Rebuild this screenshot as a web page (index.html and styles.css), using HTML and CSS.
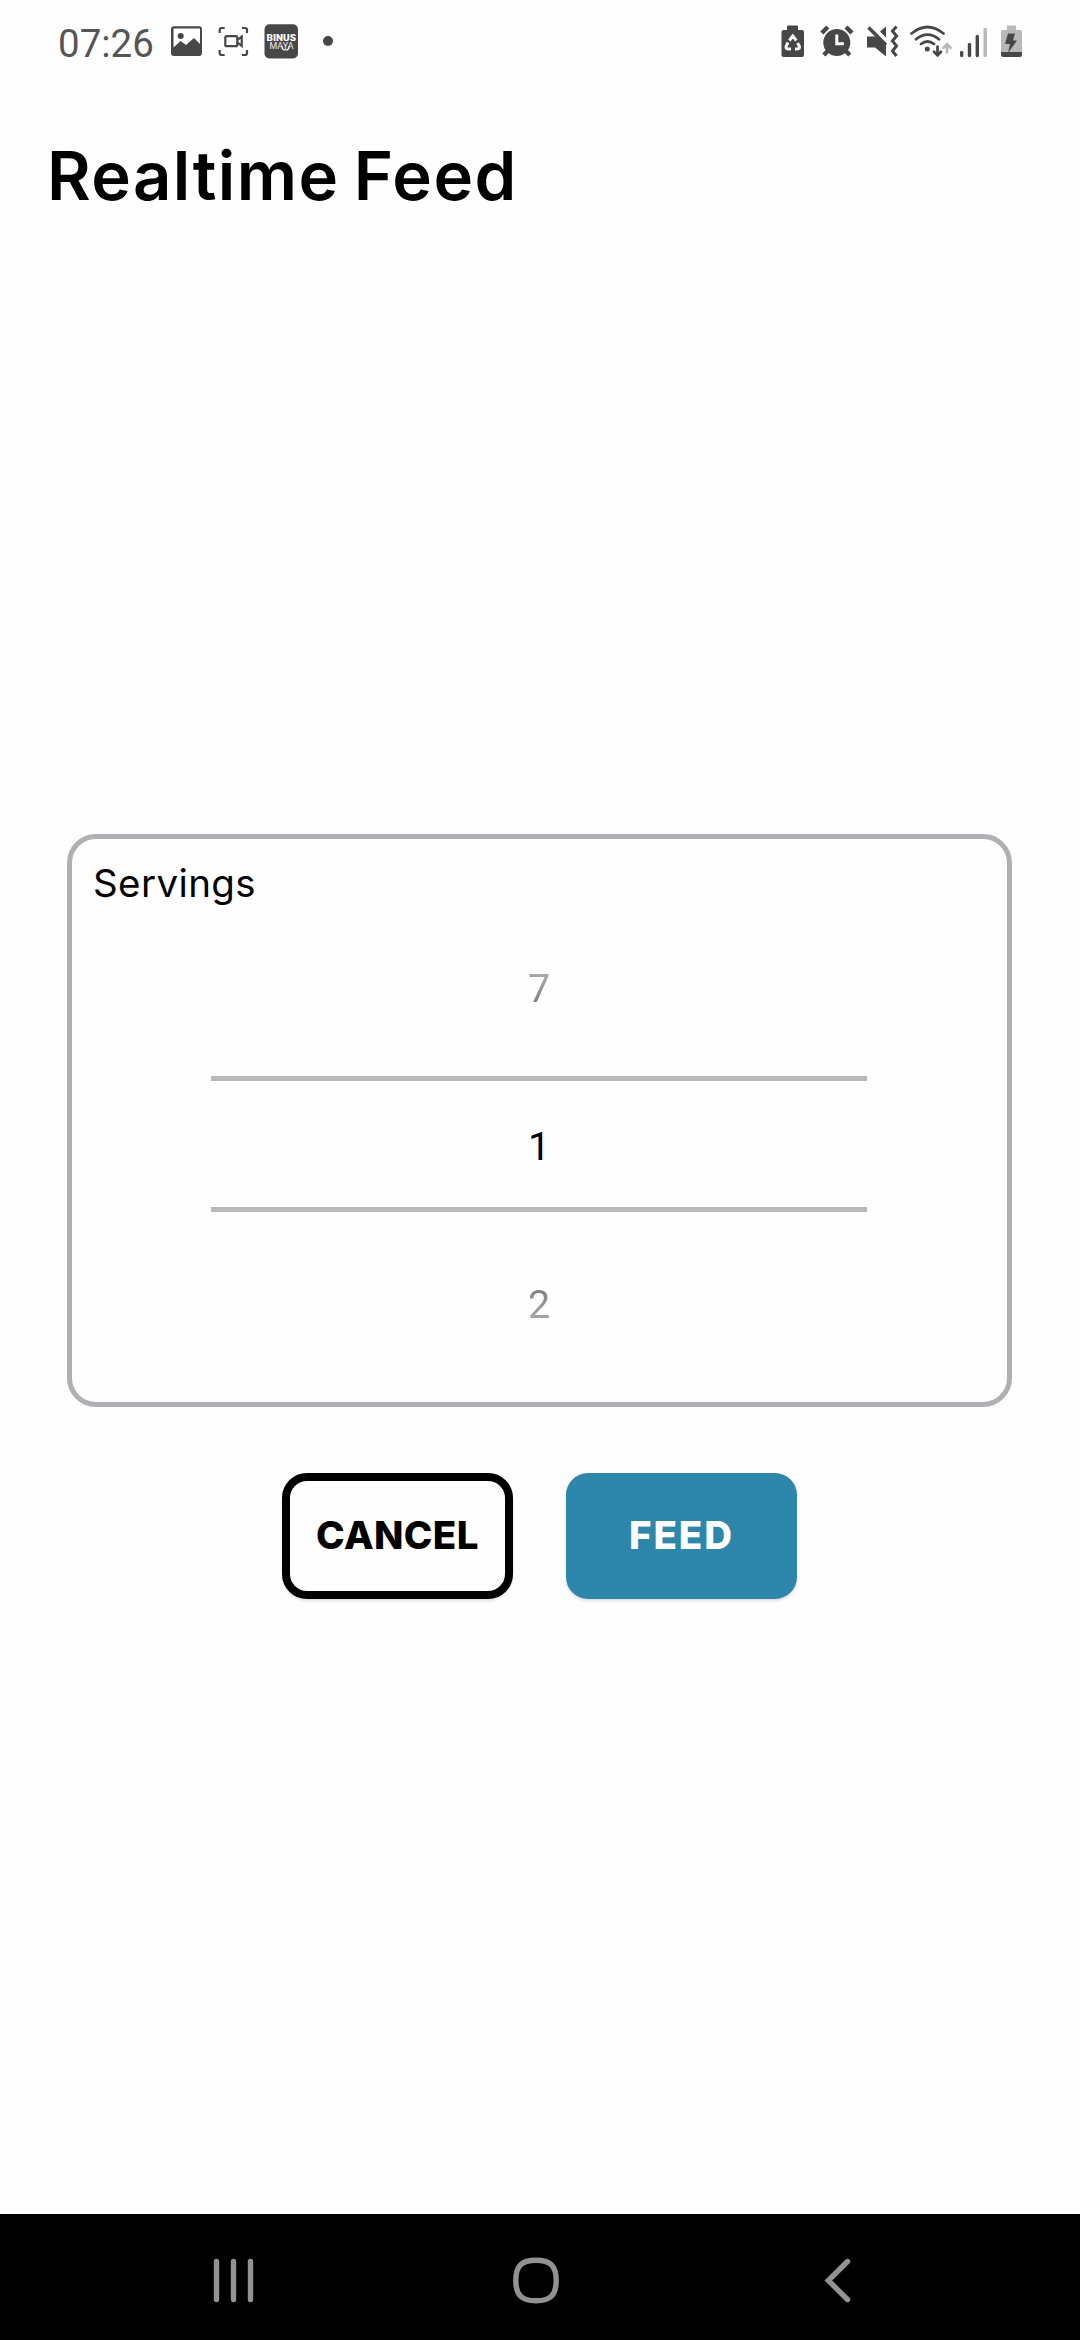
FILE: index.html
```html
<!DOCTYPE html>
<html lang="en">
<head>
<meta charset="utf-8">
<title>Realtime Feed</title>
<link rel="stylesheet" href="styles.css">
</head>
<body>
<div class="screen">
  <header class="status">
    <time class="clock">07:26</time>
    <div class="status-group notices">
      <svg width="32" height="40" viewBox="170 21 32 40"><path fill="#474747" fill-rule="evenodd" d="M174 26.300h25a3 3 0 0 1 3 3v23.700a3 3 0 0 1-3 3h-25a3 3 0 0 1-3-3v-23.700a3 3 0 0 1 3-3zM173.500 28.500v19l7-6.500 5.500 4 8-7 6 6v-15.500zM180.700 33a3 3 0 1 1 0 6 3 3 0 0 1 0-6z"/></svg>
      <svg width="32" height="40" viewBox="217 21 32 40" fill="none" stroke="#474747"><g stroke-width="2.200"><path d="M219.700 33v-3q0-2 2-2h3M242 28h3q2 0 2 2v3M219.700 50v3q0 2 2 2h3M242 55h3q2 0 2-2v-3"/><rect x="225.300" y="36.200" width="12" height="10" rx="1.500"/><path d="M237.500 40l4.200-3.500v9.500l-4.200-3.500"/></g></svg>
      <svg width="34" height="40" viewBox="263 21 34 40"><rect x="263.500" y="24.300" width="33.500" height="34.200" rx="5" fill="#474747"/><text class="badge-name" x="265.500" y="41.300" textLength="29.500" lengthAdjust="spacingAndGlyphs">BINUS</text><text class="badge-sub" x="268.500" y="49.300" textLength="24" lengthAdjust="spacingAndGlyphs">MAYA</text><path d="M281 46q-.5 4 3.500 4t3.500-4" fill="none" stroke="#eee" stroke-width="1.200"/></svg>
      <svg width="12" height="40" viewBox="321 21 12 40"><circle cx="327" cy="41" r="5" fill="#474747"/></svg>
    </div>
    <div class="status-group system">
      <svg width="24" height="40" viewBox="781 21 24 40"><path fill="#474747" d="M787 30v-3.500q0-1 1-1h9q1 0 1 1V30h4q2 0 2 2v23q0 2-2 2h-18.500q-2 0-2-2V32q0-2 2-2z"/><g fill="none" stroke="#f5f5f5" stroke-width="3"><path d="M789.300 40.500l3.500-4.500 3.500 4.500M797.500 43l2 3.500q.5 2.500-3 2.500h-1.500M791 49h-2q-4.500 0-2.500-3.500l1.500-3"/></g></svg>
      <svg width="36" height="40" viewBox="819 21 36 40"><g stroke="#474747" stroke-width="4.400"><path d="M821.800 33l6-6M852 33l-6-6M823.800 55l5-5M849.800 55l-5-5"/></g><circle cx="836.800" cy="42.500" r="13.500" fill="#474747"/><path d="M836.800 34.500v9.300h7" fill="none" stroke="#fefefe" stroke-width="3"/></svg>
      <svg width="34" height="40" viewBox="865 21 34 40"><path fill="#474747" d="M867 36.500h8.500l10.500 9.500v10.500l-11-9h-8zM880 31.500l6-5v11z"/><path d="M868.500 27.500l17.500 17.500" stroke="#474747" stroke-width="3.300"/><path d="M896.500 26.500l-4 4.500 4 5-4 5 4 5-4 5 4 5" fill="none" stroke="#474747" stroke-width="3"/></svg>
      <svg width="44" height="40" viewBox="909 21 44 40"><g fill="none" stroke="#474747" stroke-width="2.700" stroke-linecap="round"><path d="M911.500 33.500q16-13 32 0M916 39.300q11.500-9.500 23 0M921 44q6.500-5 13 0"/><path d="M937.500 46.500v8M934 51.800l3.500 3.500 3.500-3.500"/><path stroke="#b8b8b8" d="M947 52.500v-7.500M943.500 47.700l3.500-3.500 3.500 3.500"/></g><circle cx="927.300" cy="49" r="2.500" fill="#474747"/></svg>
      <svg width="30" height="40" viewBox="959 21 30 40"><g fill="none" stroke="#474747" stroke-width="3.400" stroke-linecap="round"><path d="M961.700 52.500v3M969.500 44.500v11M977.300 36.500v19"/><path stroke="#b8b8b8" d="M985.200 29.500v26"/></g></svg>
      <svg width="24" height="40" viewBox="1000 21 24 40"><path fill="#b8b8b8" d="M1007 30v-4.500h9V30h4q2 0 2 2v20h-21V32q0-2 2-2z"/><path fill="#474747" d="M1001 52h21v3q0 2-2 2h-17q-2 0-2-2zM1008 33.500h7l-2 7h4l-9 12.500 2-9h-5z"/></svg>
    </div>
  </header>

  <h1 class="title">Realtime Feed</h1>

  <main class="content">
    <section class="card">
      <h2 class="label">Servings</h2>
      <div class="picker">
        <div class="option before"><span>7</span></div>
        <div class="option current"><span>1</span></div>
        <div class="option after"><span>2</span></div>
      </div>
    </section>
    <div class="actions">
      <button class="button cancel">CANCEL</button>
      <button class="button feed">FEED</button>
    </div>
  </main>

  <nav class="navbar">
    <svg width="46" height="52" viewBox="210 2254 46 52"><path d="M216.500 2261.500v38M233.500 2261.500v38M250.500 2261.500v38" stroke="#929292" stroke-width="5.400" stroke-linecap="round"/></svg>
    <svg width="50" height="52" viewBox="511 2254 50 52"><path d="M536 2260.300c14.500 0 20.200 5.700 20.200 20.200s-5.700 20.200-20.200 20.200-20.200-5.700-20.200-20.200 5.700-20.200 20.200-20.200z" fill="none" stroke="#929292" stroke-width="5.400"/></svg>
    <svg width="32" height="52" viewBox="822 2254 32 52"><path d="M847.500 2261.500l-19.200 19 19.200 19" fill="none" stroke="#929292" stroke-width="5.400" stroke-linecap="round"/></svg>
  </nav>
</div>
</body>
</html>
```
FILE: styles.css
```css
* { box-sizing: border-box; }

body {
  margin: 0;
  background: #fefefe;
  color: #000;
  font-family: Inter, Roboto, sans-serif;
}

svg { display: block; flex: none; }

.screen {
  width: 1080px;
  height: 2340px;
  display: flex;
  flex-direction: column;
}

.status {
  height: 84px;
  padding: 21px 56px 0 58px;
  display: flex;
  align-items: flex-start;
}

.clock {
  width: 112px;
  font: 400 38.500px/45px Roboto, sans-serif;
  color: #555;
}

.status-group { display: flex; }
.notices { gap: 15px; }
.notices svg:last-child { margin-left: 9px; }
.system { margin-left: auto; gap: 10px; }
.system svg:nth-child(2) { margin-left: 4px; }
.system svg:nth-child(5) { margin-left: -4px; }
.system svg:last-child { margin-left: 1px; }

.badge-name {
  font: 900 9.500px Roboto, sans-serif;
  fill: #fff;
}

.badge-sub {
  font: 400 8.500px Roboto, sans-serif;
  fill: #eee;
}

.title {
  margin: 0;
  padding: 52px 0 0 47px;
  height: 750px;
  font-size: 67px;
  font-weight: 600;
  line-height: 80px;
  letter-spacing: 1.400px;
  word-spacing: -4px;
  white-space: nowrap;
}

.content {
  flex: 1;
  padding: 0 68px 0 67px;
}

.card {
  height: 573px;
  border: 5px solid #b0b0b4;
  border-radius: 29px;
  padding: 17px 140px 0 139px;
}

.label {
  margin: 0 0 0 -118px;
  font-size: 38.500px;
  font-weight: 400;
  line-height: 54px;
  letter-spacing: .4px;
}

.picker {
  margin-top: 7px;
  font: 400 39.500px/48px Roboto, sans-serif;
}

.option {
  display: flex;
  align-items: center;
  justify-content: center;
  height: 159px;
}

.current {
  height: 136px;
  padding-top: 5px;
  border: solid #b8b8b8;
  border-width: 5px 0;
}

.before { padding-bottom: 16px; }
.after { padding-top: 26px; }

/* neighbouring values fade out away from the selected row */
.before span, .after span {
  color: transparent;
  background: linear-gradient(#b4b4b4, #747474);
  background-clip: text;
}

.after span { background-image: linear-gradient(#747474, #b4b4b4); }

.actions {
  margin-top: 66px;
  display: flex;
  justify-content: center;
  gap: 53px;
}

.button {
  width: 231px;
  height: 126px;
  padding: 0 0 2px;
  border: 0;
  border-radius: 22px;
  font: 800 38.500px/48px Inter, sans-serif;
  box-shadow: 0 2px 3px #0002;
}

.cancel {
  border: 8px solid #000;
  border-radius: 25px;
  background: #fefefe;
  color: #000;
  letter-spacing: .4px;
}

.feed {
  background: #2e86ab;
  color: #fff;
  letter-spacing: 1.900px;
}

.navbar {
  height: 126px;
  padding: 40px 226px 0 210px;
  background: #000;
  display: flex;
  align-items: flex-start;
}

.navbar svg:nth-child(2) { margin: 0 auto 0 255px; }
```
